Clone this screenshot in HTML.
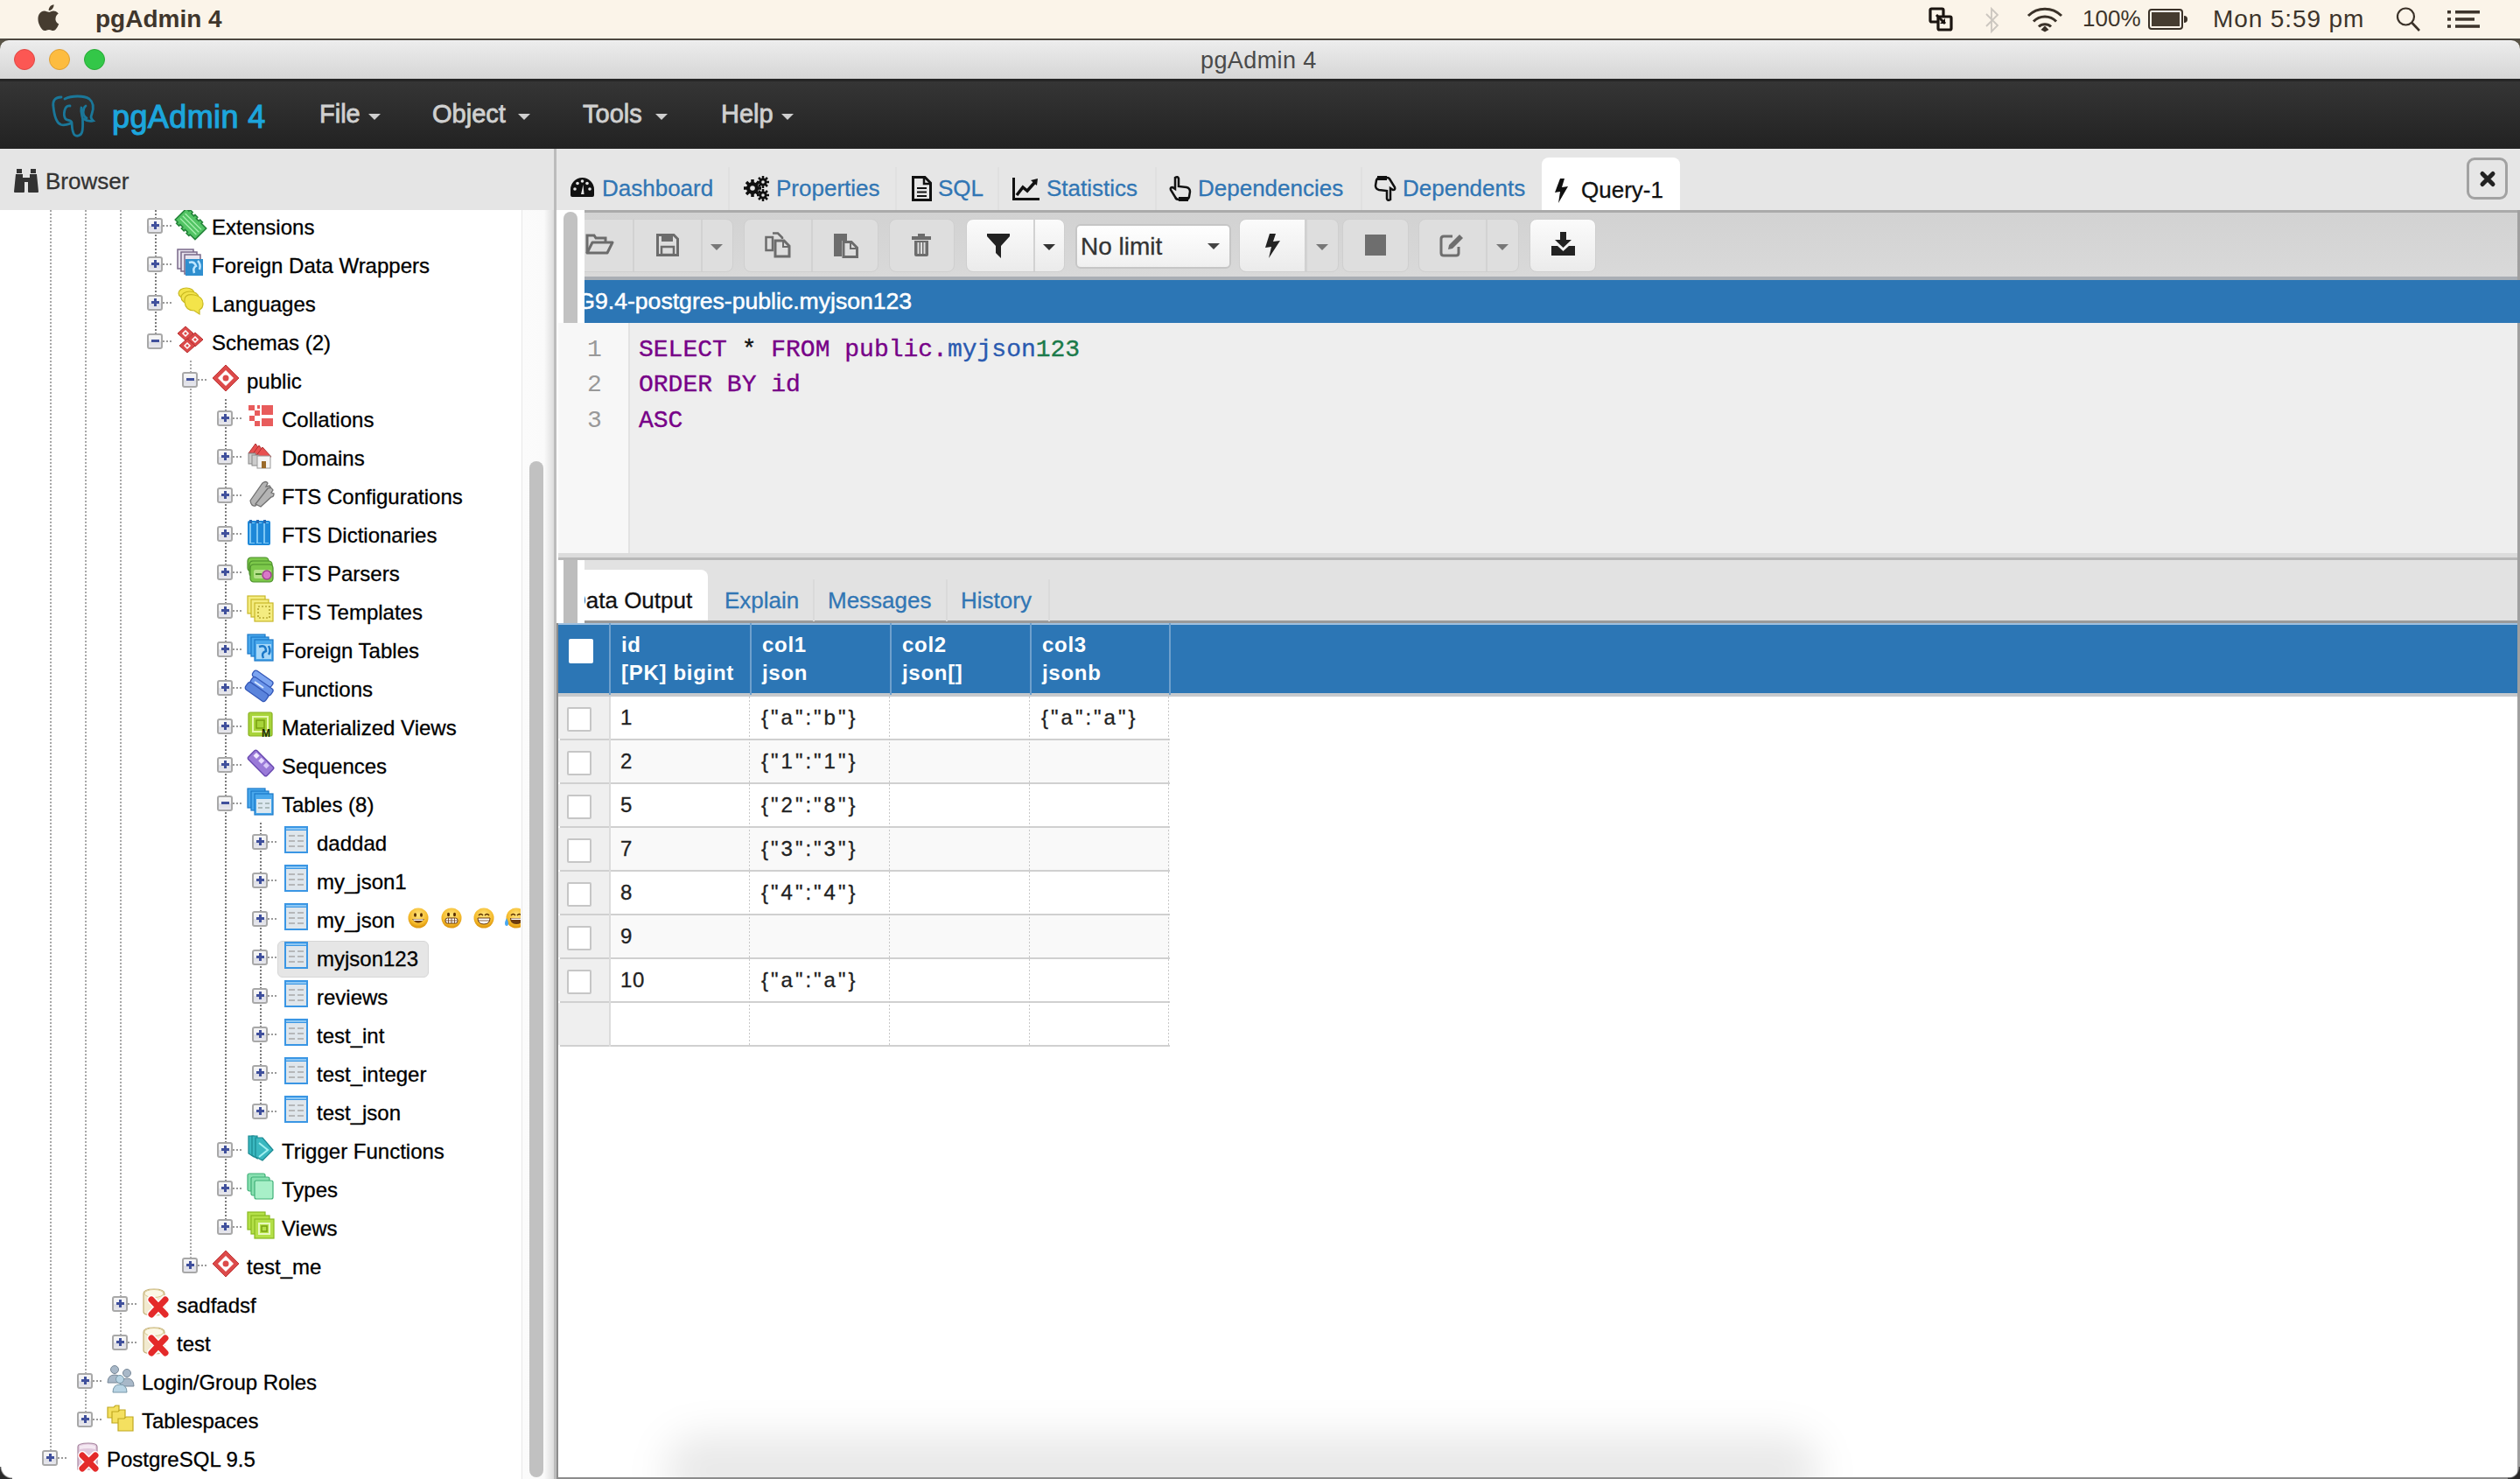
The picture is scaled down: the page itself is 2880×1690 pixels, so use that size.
<!DOCTYPE html><html><head><meta charset="utf-8"><style>
*{box-sizing:border-box;margin:0;padding:0}
html,body{width:2880px;height:1690px;overflow:hidden;background:#fff}
body{position:relative;font-family:"Liberation Sans", sans-serif;}
.a{position:absolute}
.t{position:absolute;white-space:pre;line-height:1}
svg{position:absolute;overflow:visible}
</style></head><body><div class="a" style="left:0;top:0;width:2880px;height:44px;background:#fbf4e9"></div>
<div class="a" style="left:0;top:44px;width:2880px;height:2px;background:#4d4840"></div>
<svg style="left:42px;top:4px" width="26" height="32" viewBox="0 0 26 32">
<path fill="#463c30" d="M21.6 17.1c0-3.8 3.1-5.6 3.2-5.7-1.8-2.6-4.5-2.9-5.4-3-2.3-.2-4.5 1.4-5.7 1.4-1.2 0-3-1.3-4.9-1.3C6.3 8.5 4 10 2.7 12.3c-2.6 4.6-.7 11.400 1.900 15.100 1.200 1.800 2.700 3.800 4.600 3.700 1.800-.1 2.500-1.200 4.800-1.200 2.200 0 2.800 1.200 4.800 1.200 2 0 3.200-1.800 4.400-3.600 1.400-2.100 2-4.100 2-4.200-.1 0-3.800-1.500-3.800-5.900zM18 5.900c1-1.200 1.700-2.900 1.500-4.600-1.500.1-3.200 1-4.300 2.200-.9 1.100-1.700 2.800-1.500 4.500 1.600.1 3.300-.9 4.300-2.100z"/></svg>
<div class="t" style="left:109px;top:8.48px;font-size:28px;color:#3f362c;font-weight:bold;">pgAdmin 4</div>
<svg style="left:2204px;top:8px" width="28" height="28" viewBox="0 0 28 28">
<rect x="2" y="2" width="15" height="15" rx="1.5" fill="none" stroke="#1a1410" stroke-width="3.2"/>
<rect x="11" y="11" width="15" height="15" rx="1.5" fill="#fbf4e9" stroke="#1a1410" stroke-width="3.2"/>
<path d="M9 9 L19 19" stroke="#1a1410" stroke-width="3"/><path d="M19 13 L19 19 L13 19" fill="#1a1410"/></svg>
<svg style="left:2267px;top:8px" width="20" height="30" viewBox="0 0 20 30">
<path d="M3 8 L16 21 L9 28 L9 2 L16 9 L3 22" fill="none" stroke="#cbc6bf" stroke-width="1.8"/></svg>
<svg style="left:2316px;top:7px" width="42" height="30" viewBox="0 0 42 30">
<path d="M2 11 A27 27 0 0 1 40 11" fill="none" stroke="#3a3128" stroke-width="3"/>
<path d="M8 17.5 A18 18 0 0 1 34 17.5" fill="none" stroke="#3a3128" stroke-width="3"/>
<path d="M14 23.5 A10 10 0 0 1 28 23.5" fill="none" stroke="#3a3128" stroke-width="3"/>
<path d="M16.5 27 L21 22.5 L25.5 27 L21 29.5Z" fill="#3a3128"/></svg>
<div class="t" style="left:2380px;top:8.16px;font-size:26px;color:#3d342b;">100%</div>
<svg style="left:2455px;top:10px" width="46" height="24" viewBox="0 0 46 24">
<rect x="1" y="1" width="38" height="22" rx="3" fill="none" stroke="#3a3128" stroke-width="2"/>
<rect x="4" y="4" width="32" height="16" fill="#463c30"/>
<path d="M41 8 Q45 8 45 12 Q45 16 41 16Z" fill="#3a3128"/></svg>
<div class="t" style="left:2529px;top:8.18px;font-size:28px;color:#3d342b;letter-spacing:0.9px;">Mon 5:59 pm</div>
<svg style="left:2738px;top:8px" width="30" height="30" viewBox="0 0 30 30">
<circle cx="11.5" cy="11" r="9.5" fill="none" stroke="#3a3128" stroke-width="2.2"/>
<path d="M18.5 18 L27 27" stroke="#3a3128" stroke-width="2.6"/></svg>
<svg style="left:2797px;top:12px" width="38" height="21" viewBox="0 0 38 21">
<rect x="0" y="0" width="4" height="3.5" fill="#3d342b"/><rect x="9" y="0" width="28" height="3.5" fill="#3d342b"/>
<rect x="0" y="8.2" width="4" height="3.5" fill="#3d342b"/><rect x="9" y="8.2" width="22" height="3.5" fill="#3d342b"/>
<rect x="0" y="16.3" width="4" height="3.5" fill="#3d342b"/><rect x="9" y="16.3" width="28" height="3.5" fill="#3d342b"/></svg>
<div class="a" style="left:0;top:46px;width:2880px;height:14px;background:#5a5548"></div>
<div class="a" style="left:0;top:46px;width:2880px;height:44px;background:linear-gradient(#ececec,#d6d6d6);border-radius:10px 10px 0 0;border-top:1px solid #f6f6f6"></div>
<div class="a" style="left:16px;top:56px;width:24px;height:24px;border-radius:50%;background:#fc5753;border:1px solid #df4744"></div>
<div class="a" style="left:56px;top:56px;width:24px;height:24px;border-radius:50%;background:#fdbc40;border:1px solid #de9f34"></div>
<div class="a" style="left:96px;top:56px;width:24px;height:24px;border-radius:50%;background:#33c748;border:1px solid #27aa35"></div>
<div class="t" style="left:1372px;top:56.32px;font-size:27px;color:#4a4a4a;letter-spacing:0.4px;">pgAdmin 4</div>
<div class="a" style="left:0;top:90px;width:2880px;height:80px;background:linear-gradient(#353535,#222222);border-top:3px solid #262626"></div>
<svg style="left:58px;top:108px" width="52" height="50" viewBox="0 0 52 50">
<g fill="none" stroke="#1a7799" stroke-width="2.8" stroke-linecap="round">
<path d="M12 3 C4 3 2 8 3 14 C4 24 7 33 12 34.5 C16 35.5 20 34 23 33"/>
<path d="M16 5 C24 1 38 1 44 5 C49 9 49 16 47 22 C46 25 45 27 48.5 30 C45 31 41 30 38 28"/>
<path d="M22 13 C15 12 14 24 17 28 C19 30 23 29 24 32 C24.5 37 24 42 27 46 C30 48.5 35 47 36 42 C37 37 36.5 32 36.5 28 C36 24 34 20 35 15"/>
<path d="M40 13 C36 16 36 24 41 27"/>
</g></svg>
<div class="t" style="left:128px;top:115.76px;font-size:36px;color:#1ca5dc;-webkit-text-stroke:1.1px #1ca5dc;letter-spacing:0.4px;">pgAdmin 4</div>
<div class="t" style="left:365px;top:115.64px;font-size:29px;color:#d0d0d0;-webkit-text-stroke:0.8px #d0d0d0;">File</div>
<div class="a" style="left:421px;top:130px;width:0;height:0;border-left:7px solid transparent;border-right:7px solid transparent;border-top:7px solid #cfcfcf"></div>
<div class="t" style="left:494px;top:115.64px;font-size:29px;color:#d0d0d0;-webkit-text-stroke:0.8px #d0d0d0;">Object</div>
<div class="a" style="left:592px;top:130px;width:0;height:0;border-left:7px solid transparent;border-right:7px solid transparent;border-top:7px solid #cfcfcf"></div>
<div class="t" style="left:666px;top:115.64px;font-size:29px;color:#d0d0d0;-webkit-text-stroke:0.8px #d0d0d0;">Tools</div>
<div class="a" style="left:749px;top:130px;width:0;height:0;border-left:7px solid transparent;border-right:7px solid transparent;border-top:7px solid #cfcfcf"></div>
<div class="t" style="left:824px;top:115.64px;font-size:29px;color:#d0d0d0;-webkit-text-stroke:0.8px #d0d0d0;">Help</div>
<div class="a" style="left:893px;top:130px;width:0;height:0;border-left:7px solid transparent;border-right:7px solid transparent;border-top:7px solid #cfcfcf"></div>
<div class="a" style="left:0;top:170px;width:634px;height:70px;background:#e5e5e5"></div>
<svg style="left:16px;top:193px" width="28" height="28" viewBox="0 0 28 28">
<g fill="#333">
<rect x="3" y="0" width="6" height="5"/><rect x="19" y="0" width="6" height="5"/>
<path d="M2 6 H10 V10 H18 V6 H26 L28 26 Q28 27 27 27 H17 Q16 27 16 26 V15 H12 V26 Q12 27 11 27 H1 Q0 27 0 26Z"/>
</g></svg>
<div class="t" style="left:52px;top:194.16px;font-size:26px;color:#333;-webkit-text-stroke:0.3px #333;">Browser</div>
<div class="a" style="left:0;top:240px;width:634px;height:1450px;background:#fff"></div>
<div class="a" style="left:596px;top:240px;width:38px;height:1450px;background:linear-gradient(90deg,#e8e8e8 0 1px,#fbfbfb 1px,#fafafa 68%,#dadada 100%)"></div>
<div class="a" style="left:605px;top:527px;width:16px;height:1161px;background:#c1c1c1;border-radius:8px"></div>
<div class="a" style="left:0;top:240px;width:595px;height:1450px;overflow:hidden"><div class="a" style="left:0;top:-240px;width:595px;height:1690px"><div class="a" style="left:56.5px;top:240.0px;width:2.5px;height:1425.5px;background:repeating-linear-gradient(180deg,#a8a8a8 0 2px,transparent 2px 4px)"></div><div class="a" style="left:96.5px;top:240.0px;width:2.5px;height:1381.5px;background:repeating-linear-gradient(180deg,#a8a8a8 0 2px,transparent 2px 4px)"></div><div class="a" style="left:136.5px;top:240.0px;width:2.5px;height:1293.5px;background:repeating-linear-gradient(180deg,#a8a8a8 0 2px,transparent 2px 4px)"></div><div class="a" style="left:176.5px;top:240.0px;width:2.5px;height:149.5px;background:repeating-linear-gradient(180deg,#7c7c7c 0 2px,transparent 2px 4px)"></div><div class="a" style="left:216.5px;top:411.5px;width:2.5px;height:1034.0px;background:repeating-linear-gradient(180deg,#a8a8a8 0 2px,transparent 2px 4px)"></div><div class="a" style="left:256.5px;top:455.5px;width:2.5px;height:946.0px;background:repeating-linear-gradient(180deg,#7c7c7c 0 2px,transparent 2px 4px)"></div><div class="a" style="left:296.5px;top:939.5px;width:2.5px;height:330.0px;background:repeating-linear-gradient(180deg,#7c7c7c 0 2px,transparent 2px 4px)"></div><div class="a" style="left:317px;top:1075px;width:173px;height:42px;background:#e6e6e6;border:1px solid #d6d6d6;border-radius:6px"></div><div class="a" style="left:186px;top:256.5px;width:12px;height:2px;background:repeating-linear-gradient(90deg,#9a9a9a 0 2px,transparent 2px 4px)"></div><div class="a" style="left:168px;top:248.5px;width:18px;height:18px;border:2px solid #a8a8a8;border-radius:3px;background:linear-gradient(#f6f6f6,#f0f0f2 50%,#dcdde4 55%,#e8e8ee)"><div class="a" style="left:2.5px;top:5.5px;width:9px;height:3px;background:#40509c"></div><div class="a" style="left:5.5px;top:2.5px;width:3px;height:9px;background:#40509c"></div></div><svg style="left:202px;top:240.0px" width="32" height="32" viewBox="0 0 32 32"><g transform="rotate(45 16 16)"><path d="M0 7 H4 V5 H8 V7 H12 V5 H16 V7 H20 V5 H24 V7 H32 V25 H24 V27 H20 V25 H16 V27 H12 V25 H8 V27 H4 V25 H0Z" fill="#52c464" stroke="#24843a" stroke-width="1.6"/>
<path d="M3 12 H29 M3 16 H29 M3 20 H29" stroke="#a8f0b0" stroke-width="1.3"/></g></svg><div class="t" style="left:242px;top:247.84px;font-size:24px;color:#000;-webkit-text-stroke:0.3px #000;">Extensions</div><div class="a" style="left:186px;top:300.5px;width:12px;height:2px;background:repeating-linear-gradient(90deg,#9a9a9a 0 2px,transparent 2px 4px)"></div><div class="a" style="left:168px;top:292.5px;width:18px;height:18px;border:2px solid #a8a8a8;border-radius:3px;background:linear-gradient(#f6f6f6,#f0f0f2 50%,#dcdde4 55%,#e8e8ee)"><div class="a" style="left:2.5px;top:5.5px;width:9px;height:3px;background:#40509c"></div><div class="a" style="left:5.5px;top:2.5px;width:3px;height:9px;background:#40509c"></div></div><svg style="left:202px;top:284.0px" width="32" height="32" viewBox="0 0 32 32"><g stroke="#7a6a8a" stroke-width="1.5" fill="#e8e4ee"><rect x="1" y="1" width="18" height="22"/><rect x="5" y="4" width="18" height="22"/><rect x="9" y="7" width="18" height="22"/></g>
<rect x="10" y="12" width="20" height="19" fill="#2f8fcf"/><path d="M14 16 Q20 14 22 20 Q18 22 20 28 M24 14 Q28 18 26 24" stroke="#bfe6ff" stroke-width="2.5" fill="none"/></svg><div class="t" style="left:242px;top:291.84px;font-size:24px;color:#000;-webkit-text-stroke:0.3px #000;">Foreign Data Wrappers</div><div class="a" style="left:186px;top:344.5px;width:12px;height:2px;background:repeating-linear-gradient(90deg,#9a9a9a 0 2px,transparent 2px 4px)"></div><div class="a" style="left:168px;top:336.5px;width:18px;height:18px;border:2px solid #a8a8a8;border-radius:3px;background:linear-gradient(#f6f6f6,#f0f0f2 50%,#dcdde4 55%,#e8e8ee)"><div class="a" style="left:2.5px;top:5.5px;width:9px;height:3px;background:#40509c"></div><div class="a" style="left:5.5px;top:2.5px;width:3px;height:9px;background:#40509c"></div></div><svg style="left:202px;top:328.0px" width="32" height="32" viewBox="0 0 32 32"><g fill="#f3e44a" stroke="#c8b820" stroke-width="1.2"><ellipse cx="11" cy="7" rx="9" ry="6"/><ellipse cx="15" cy="12" rx="10" ry="7"/><path d="M9 17 Q8 7 20 9 Q30 11 30 19 Q30 24 26 26 L26 31 L20 27 Q10 27 9 17Z"/></g></svg><div class="t" style="left:242px;top:335.84px;font-size:24px;color:#000;-webkit-text-stroke:0.3px #000;">Languages</div><div class="a" style="left:186px;top:388.5px;width:12px;height:2px;background:repeating-linear-gradient(90deg,#9a9a9a 0 2px,transparent 2px 4px)"></div><div class="a" style="left:168px;top:380.5px;width:18px;height:18px;border:2px solid #a8a8a8;border-radius:3px;background:linear-gradient(#f6f6f6,#f0f0f2 50%,#dcdde4 55%,#e8e8ee)"><div class="a" style="left:2.5px;top:5.5px;width:9px;height:3px;background:#40509c"></div></div><svg style="left:202px;top:372.0px" width="32" height="32" viewBox="0 0 32 32"><g fill="#dc4a4a" stroke="#b83030" stroke-width="1"><path d="M10 1 L19 9 L10 17 L1 9Z"/><path d="M21 8 L30 16 L21 24 L12 16Z"/><path d="M12 15 L21 23 L12 31 L3 23Z"/></g>
<g fill="none" stroke="#fff" stroke-width="1.5"><path d="M10 6 L13 9 L10 12 L7 9Z"/><path d="M21 13 L24 16 L21 19 L18 16Z"/><path d="M12 20 L15 23 L12 26 L9 23Z"/></g></svg><div class="t" style="left:242px;top:379.84px;font-size:24px;color:#000;-webkit-text-stroke:0.3px #000;">Schemas (2)</div><div class="a" style="left:226px;top:432.5px;width:12px;height:2px;background:repeating-linear-gradient(90deg,#9a9a9a 0 2px,transparent 2px 4px)"></div><div class="a" style="left:208px;top:424.5px;width:18px;height:18px;border:2px solid #a8a8a8;border-radius:3px;background:linear-gradient(#f6f6f6,#f0f0f2 50%,#dcdde4 55%,#e8e8ee)"><div class="a" style="left:2.5px;top:5.5px;width:9px;height:3px;background:#40509c"></div></div><svg style="left:242px;top:416.0px" width="32" height="32" viewBox="0 0 32 32"><path d="M16 1 L31 16 L16 31 L1 16Z" fill="#dc4a4a" stroke="#c03a3a" stroke-width="1"/><path d="M16 7 L25 16 L16 25 L7 16Z" fill="#fff"/><circle cx="16" cy="16" r="3.5" fill="#dc4a4a"/></svg><div class="t" style="left:282px;top:423.84px;font-size:24px;color:#000;-webkit-text-stroke:0.3px #000;">public</div><div class="a" style="left:266px;top:476.5px;width:12px;height:2px;background:repeating-linear-gradient(90deg,#9a9a9a 0 2px,transparent 2px 4px)"></div><div class="a" style="left:248px;top:468.5px;width:18px;height:18px;border:2px solid #a8a8a8;border-radius:3px;background:linear-gradient(#f6f6f6,#f0f0f2 50%,#dcdde4 55%,#e8e8ee)"><div class="a" style="left:2.5px;top:5.5px;width:9px;height:3px;background:#40509c"></div><div class="a" style="left:5.5px;top:2.5px;width:3px;height:9px;background:#40509c"></div></div><svg style="left:282px;top:460.0px" width="32" height="32" viewBox="0 0 32 32"><g fill="#e85c5c"><rect x="2" y="3" width="7" height="6"/><rect x="9" y="9" width="6" height="6"/><rect x="3" y="15" width="6" height="6"/><rect x="9" y="21" width="6" height="6"/><rect x="17" y="3" width="13" height="11"/><rect x="17" y="18" width="13" height="9"/><rect x="12" y="3" width="3" height="4"/></g></svg><div class="t" style="left:322px;top:467.84px;font-size:24px;color:#000;-webkit-text-stroke:0.3px #000;">Collations</div><div class="a" style="left:266px;top:520.5px;width:12px;height:2px;background:repeating-linear-gradient(90deg,#9a9a9a 0 2px,transparent 2px 4px)"></div><div class="a" style="left:248px;top:512.5px;width:18px;height:18px;border:2px solid #a8a8a8;border-radius:3px;background:linear-gradient(#f6f6f6,#f0f0f2 50%,#dcdde4 55%,#e8e8ee)"><div class="a" style="left:2.5px;top:5.5px;width:9px;height:3px;background:#40509c"></div><div class="a" style="left:5.5px;top:2.5px;width:3px;height:9px;background:#40509c"></div></div><svg style="left:282px;top:504.0px" width="32" height="32" viewBox="0 0 32 32"><g fill="#e85050" stroke="#b03030" stroke-width="1"><path d="M2 14 L10 3 L18 14Z"/><path d="M6 16 L14 5 L22 16Z"/><path d="M10 18 L18 7 L28 18Z"/></g>
<g fill="#ccc" stroke="#888" stroke-width="1"><rect x="2" y="14" width="8" height="12"/><rect x="6" y="16" width="8" height="12"/></g>
<rect x="12" y="17" width="15" height="14" fill="#f4f4f4" stroke="#999" stroke-width="1"/><rect x="17" y="23" width="5" height="8" fill="#9a6a2a"/></svg><div class="t" style="left:322px;top:511.84px;font-size:24px;color:#000;-webkit-text-stroke:0.3px #000;">Domains</div><div class="a" style="left:266px;top:564.5px;width:12px;height:2px;background:repeating-linear-gradient(90deg,#9a9a9a 0 2px,transparent 2px 4px)"></div><div class="a" style="left:248px;top:556.5px;width:18px;height:18px;border:2px solid #a8a8a8;border-radius:3px;background:linear-gradient(#f6f6f6,#f0f0f2 50%,#dcdde4 55%,#e8e8ee)"><div class="a" style="left:2.5px;top:5.5px;width:9px;height:3px;background:#40509c"></div><div class="a" style="left:5.5px;top:2.5px;width:3px;height:9px;background:#40509c"></div></div><svg style="left:282px;top:548.0px" width="32" height="32" viewBox="0 0 32 32"><g fill="#b4b4b4" stroke="#707070" stroke-width="1.3"><path d="M4 24 L18 4 Q22 1 24 4 L22 8 L26 7 Q29 10 26 12 L10 30 Q5 31 4 24Z"/><path d="M10 28 L24 10 Q28 8 30 12 L28 15 L31 16 Q31 20 28 20 L16 31Z"/></g></svg><div class="t" style="left:322px;top:555.84px;font-size:24px;color:#000;-webkit-text-stroke:0.3px #000;">FTS Configurations</div><div class="a" style="left:266px;top:608.5px;width:12px;height:2px;background:repeating-linear-gradient(90deg,#9a9a9a 0 2px,transparent 2px 4px)"></div><div class="a" style="left:248px;top:600.5px;width:18px;height:18px;border:2px solid #a8a8a8;border-radius:3px;background:linear-gradient(#f6f6f6,#f0f0f2 50%,#dcdde4 55%,#e8e8ee)"><div class="a" style="left:2.5px;top:5.5px;width:9px;height:3px;background:#40509c"></div><div class="a" style="left:5.5px;top:2.5px;width:3px;height:9px;background:#40509c"></div></div><svg style="left:282px;top:592.0px" width="32" height="32" viewBox="0 0 32 32"><rect x="1" y="3" width="26" height="28" rx="2" fill="#1e88d8"/><g fill="#7cc6f4"><rect x="3" y="5" width="6" height="24"/><rect x="11" y="5" width="6" height="24"/><rect x="19" y="5" width="6" height="24"/></g><g fill="#2a6ab0"><rect x="3" y="2" width="3" height="4"/><rect x="11" y="2" width="3" height="4"/><rect x="19" y="2" width="3" height="4"/></g><g fill="#1e88d8"><rect x="5" y="6" width="4" height="22"/><rect x="13" y="6" width="4" height="22"/><rect x="21" y="6" width="4" height="22"/></g></svg><div class="t" style="left:322px;top:599.84px;font-size:24px;color:#000;-webkit-text-stroke:0.3px #000;">FTS Dictionaries</div><div class="a" style="left:266px;top:652.5px;width:12px;height:2px;background:repeating-linear-gradient(90deg,#9a9a9a 0 2px,transparent 2px 4px)"></div><div class="a" style="left:248px;top:644.5px;width:18px;height:18px;border:2px solid #a8a8a8;border-radius:3px;background:linear-gradient(#f6f6f6,#f0f0f2 50%,#dcdde4 55%,#e8e8ee)"><div class="a" style="left:2.5px;top:5.5px;width:9px;height:3px;background:#40509c"></div><div class="a" style="left:5.5px;top:2.5px;width:3px;height:9px;background:#40509c"></div></div><svg style="left:282px;top:636.0px" width="32" height="32" viewBox="0 0 32 32"><g fill="#7cc84a" stroke="#4a8e2a" stroke-width="1.2"><rect x="1" y="1" width="24" height="16" rx="4"/><rect x="3" y="5" width="26" height="18" rx="4"/><rect x="4" y="9" width="26" height="20" rx="4"/></g><rect x="8" y="15" width="20" height="10" rx="2" fill="#b4e088"/><circle cx="23" cy="21" r="5" fill="#d878c8" stroke="#a04090" stroke-width="1.5"/><path d="M10 20 H17" stroke="#4a8e2a" stroke-width="2"/></svg><div class="t" style="left:322px;top:643.84px;font-size:24px;color:#000;-webkit-text-stroke:0.3px #000;">FTS Parsers</div><div class="a" style="left:266px;top:696.5px;width:12px;height:2px;background:repeating-linear-gradient(90deg,#9a9a9a 0 2px,transparent 2px 4px)"></div><div class="a" style="left:248px;top:688.5px;width:18px;height:18px;border:2px solid #a8a8a8;border-radius:3px;background:linear-gradient(#f6f6f6,#f0f0f2 50%,#dcdde4 55%,#e8e8ee)"><div class="a" style="left:2.5px;top:5.5px;width:9px;height:3px;background:#40509c"></div><div class="a" style="left:5.5px;top:2.5px;width:3px;height:9px;background:#40509c"></div></div><svg style="left:282px;top:680.0px" width="32" height="32" viewBox="0 0 32 32"><g fill="#f4ec80" stroke="#c8b828" stroke-width="1.2"><rect x="1" y="1" width="20" height="20"/><rect x="5" y="5" width="20" height="20"/><rect x="9" y="9" width="21" height="21"/></g><rect x="13" y="13" width="13" height="13" fill="none" stroke="#9a8a10" stroke-width="1.2" stroke-dasharray="2 2"/></svg><div class="t" style="left:322px;top:687.84px;font-size:24px;color:#000;-webkit-text-stroke:0.3px #000;">FTS Templates</div><div class="a" style="left:266px;top:740.5px;width:12px;height:2px;background:repeating-linear-gradient(90deg,#9a9a9a 0 2px,transparent 2px 4px)"></div><div class="a" style="left:248px;top:732.5px;width:18px;height:18px;border:2px solid #a8a8a8;border-radius:3px;background:linear-gradient(#f6f6f6,#f0f0f2 50%,#dcdde4 55%,#e8e8ee)"><div class="a" style="left:2.5px;top:5.5px;width:9px;height:3px;background:#40509c"></div><div class="a" style="left:5.5px;top:2.5px;width:3px;height:9px;background:#40509c"></div></div><svg style="left:282px;top:724.0px" width="32" height="32" viewBox="0 0 32 32"><g fill="#4aa8ec" stroke="#1a78c8" stroke-width="1.2"><rect x="1" y="1" width="20" height="22"/><rect x="5" y="4" width="20" height="22"/><rect x="9" y="7" width="21" height="24"/></g><rect x="11" y="12" width="17" height="17" fill="#a8d8f8"/><path d="M14 15 Q22 12 22 20 Q16 22 19 28 M25 14 Q28 20 25 24" stroke="#1a78c8" stroke-width="2.5" fill="none"/></svg><div class="t" style="left:322px;top:731.84px;font-size:24px;color:#000;-webkit-text-stroke:0.3px #000;">Foreign Tables</div><div class="a" style="left:266px;top:784.5px;width:12px;height:2px;background:repeating-linear-gradient(90deg,#9a9a9a 0 2px,transparent 2px 4px)"></div><div class="a" style="left:248px;top:776.5px;width:18px;height:18px;border:2px solid #a8a8a8;border-radius:3px;background:linear-gradient(#f6f6f6,#f0f0f2 50%,#dcdde4 55%,#e8e8ee)"><div class="a" style="left:2.5px;top:5.5px;width:9px;height:3px;background:#40509c"></div><div class="a" style="left:5.5px;top:2.5px;width:3px;height:9px;background:#40509c"></div></div><svg style="left:282px;top:768.0px" width="32" height="32" viewBox="0 0 32 32"><g transform="rotate(35 16 16)" stroke="#3458b8" stroke-width="1.3">
<rect x="0" y="4" width="26" height="8" rx="3" fill="#7ca4f0"/>
<rect x="3" y="11" width="28" height="9" rx="3" fill="#6a94e8"/>
<rect x="2" y="19" width="28" height="10" rx="3" fill="#5a84dc"/></g>
<path d="M9 11 L19 18" stroke="#d8e8ff" stroke-width="2"/></svg><div class="t" style="left:322px;top:775.84px;font-size:24px;color:#000;-webkit-text-stroke:0.3px #000;">Functions</div><div class="a" style="left:266px;top:828.5px;width:12px;height:2px;background:repeating-linear-gradient(90deg,#9a9a9a 0 2px,transparent 2px 4px)"></div><div class="a" style="left:248px;top:820.5px;width:18px;height:18px;border:2px solid #a8a8a8;border-radius:3px;background:linear-gradient(#f6f6f6,#f0f0f2 50%,#dcdde4 55%,#e8e8ee)"><div class="a" style="left:2.5px;top:5.5px;width:9px;height:3px;background:#40509c"></div><div class="a" style="left:5.5px;top:2.5px;width:3px;height:9px;background:#40509c"></div></div><svg style="left:282px;top:812.0px" width="32" height="32" viewBox="0 0 32 32"><rect x="2" y="2" width="27" height="27" rx="2" fill="#a8d43a" stroke="#88b020" stroke-width="1.2"/><rect x="7" y="7" width="17" height="17" fill="none" stroke="#e8f8b0" stroke-width="2"/><rect x="11" y="11" width="9" height="9" fill="none" stroke="#78a010" stroke-width="1.5"/><text x="17" y="30" font-family="Liberation Sans" font-weight="bold" font-size="12" fill="#1a2a00">M</text></svg><div class="t" style="left:322px;top:819.84px;font-size:24px;color:#000;-webkit-text-stroke:0.3px #000;">Materialized Views</div><div class="a" style="left:266px;top:872.5px;width:12px;height:2px;background:repeating-linear-gradient(90deg,#9a9a9a 0 2px,transparent 2px 4px)"></div><div class="a" style="left:248px;top:864.5px;width:18px;height:18px;border:2px solid #a8a8a8;border-radius:3px;background:linear-gradient(#f6f6f6,#f0f0f2 50%,#dcdde4 55%,#e8e8ee)"><div class="a" style="left:2.5px;top:5.5px;width:9px;height:3px;background:#40509c"></div><div class="a" style="left:5.5px;top:2.5px;width:3px;height:9px;background:#40509c"></div></div><svg style="left:282px;top:856.0px" width="32" height="32" viewBox="0 0 32 32"><g transform="rotate(45 16 16)"><rect x="1" y="9" width="30" height="14" rx="2" fill="#9a7ad8" stroke="#6848b0" stroke-width="1.4"/>
<rect x="4" y="11" width="5" height="5" fill="#f0e8ff"/><rect x="12" y="11" width="5" height="5" fill="#e8dcff"/><rect x="20" y="11" width="5" height="5" fill="#d8c8f8"/></g></svg><div class="t" style="left:322px;top:863.84px;font-size:24px;color:#000;-webkit-text-stroke:0.3px #000;">Sequences</div><div class="a" style="left:266px;top:916.5px;width:12px;height:2px;background:repeating-linear-gradient(90deg,#9a9a9a 0 2px,transparent 2px 4px)"></div><div class="a" style="left:248px;top:908.5px;width:18px;height:18px;border:2px solid #a8a8a8;border-radius:3px;background:linear-gradient(#f6f6f6,#f0f0f2 50%,#dcdde4 55%,#e8e8ee)"><div class="a" style="left:2.5px;top:5.5px;width:9px;height:3px;background:#40509c"></div></div><svg style="left:282px;top:900.0px" width="32" height="32" viewBox="0 0 32 32"><g fill="#4aa8ec" stroke="#1a78c8" stroke-width="1.2"><rect x="1" y="1" width="20" height="22"/><rect x="5" y="4" width="20" height="22"/><rect x="9" y="7" width="21" height="24"/></g><rect x="11" y="13" width="17" height="16" fill="#dce8f0"/><g stroke="#9aa" stroke-width="1.5"><path d="M13 18 H18 M21 18 H26 M13 23 H18 M21 23 H26"/></g></svg><div class="t" style="left:322px;top:907.84px;font-size:24px;color:#000;-webkit-text-stroke:0.3px #000;">Tables (8)</div><div class="a" style="left:306px;top:960.5px;width:12px;height:2px;background:repeating-linear-gradient(90deg,#9a9a9a 0 2px,transparent 2px 4px)"></div><div class="a" style="left:288px;top:952.5px;width:18px;height:18px;border:2px solid #a8a8a8;border-radius:3px;background:linear-gradient(#f6f6f6,#f0f0f2 50%,#dcdde4 55%,#e8e8ee)"><div class="a" style="left:2.5px;top:5.5px;width:9px;height:3px;background:#40509c"></div><div class="a" style="left:5.5px;top:2.5px;width:3px;height:9px;background:#40509c"></div></div><svg style="left:322px;top:944.0px" width="32" height="32" viewBox="0 0 32 32"><rect x="3" y="0" width="27" height="31" fill="#3a96e4"/><rect x="5" y="5" width="23" height="24" fill="#dfe6ec"/><rect x="5" y="2" width="23" height="2" fill="#8ec8f4"/><g stroke="#a8a8a8" stroke-width="1.6"><path d="M8 11 H15 M18 11 H25 M8 17 H15 M18 17 H25 M8 23 H15 M18 23 H25"/></g></svg><div class="t" style="left:362px;top:951.84px;font-size:24px;color:#000;-webkit-text-stroke:0.3px #000;">daddad</div><div class="a" style="left:306px;top:1004.5px;width:12px;height:2px;background:repeating-linear-gradient(90deg,#9a9a9a 0 2px,transparent 2px 4px)"></div><div class="a" style="left:288px;top:996.5px;width:18px;height:18px;border:2px solid #a8a8a8;border-radius:3px;background:linear-gradient(#f6f6f6,#f0f0f2 50%,#dcdde4 55%,#e8e8ee)"><div class="a" style="left:2.5px;top:5.5px;width:9px;height:3px;background:#40509c"></div><div class="a" style="left:5.5px;top:2.5px;width:3px;height:9px;background:#40509c"></div></div><svg style="left:322px;top:988.0px" width="32" height="32" viewBox="0 0 32 32"><rect x="3" y="0" width="27" height="31" fill="#3a96e4"/><rect x="5" y="5" width="23" height="24" fill="#dfe6ec"/><rect x="5" y="2" width="23" height="2" fill="#8ec8f4"/><g stroke="#a8a8a8" stroke-width="1.6"><path d="M8 11 H15 M18 11 H25 M8 17 H15 M18 17 H25 M8 23 H15 M18 23 H25"/></g></svg><div class="t" style="left:362px;top:995.84px;font-size:24px;color:#000;-webkit-text-stroke:0.3px #000;">my_json1</div><div class="a" style="left:306px;top:1048.5px;width:12px;height:2px;background:repeating-linear-gradient(90deg,#9a9a9a 0 2px,transparent 2px 4px)"></div><div class="a" style="left:288px;top:1040.5px;width:18px;height:18px;border:2px solid #a8a8a8;border-radius:3px;background:linear-gradient(#f6f6f6,#f0f0f2 50%,#dcdde4 55%,#e8e8ee)"><div class="a" style="left:2.5px;top:5.5px;width:9px;height:3px;background:#40509c"></div><div class="a" style="left:5.5px;top:2.5px;width:3px;height:9px;background:#40509c"></div></div><svg style="left:322px;top:1032.0px" width="32" height="32" viewBox="0 0 32 32"><rect x="3" y="0" width="27" height="31" fill="#3a96e4"/><rect x="5" y="5" width="23" height="24" fill="#dfe6ec"/><rect x="5" y="2" width="23" height="2" fill="#8ec8f4"/><g stroke="#a8a8a8" stroke-width="1.6"><path d="M8 11 H15 M18 11 H25 M8 17 H15 M18 17 H25 M8 23 H15 M18 23 H25"/></g></svg><div class="t" style="left:362px;top:1039.84px;font-size:24px;color:#000;-webkit-text-stroke:0.3px #000;">my_json</div><svg style="left:466px;top:1037.0px" width="24" height="24" viewBox="0 0 24 24"><defs><radialGradient id="eg0" cx="50%" cy="35%" r="60%"><stop offset="0" stop-color="#ffe680"/><stop offset=".75" stop-color="#f5bb2c"/><stop offset="1" stop-color="#e09a10"/></radialGradient></defs><circle cx="12" cy="12" r="11.5" fill="url(#eg0)"/><path d="M5 13 Q12 22 19 13Z" fill="#6a3a10"/><path d="M6 13.5 H18 L17 15 H7Z" fill="#fff"/><ellipse cx="8.5" cy="8.5" rx="1.5" ry="2.2" fill="#5a3000"/><ellipse cx="15.5" cy="8.5" rx="1.5" ry="2.2" fill="#5a3000"/></svg><svg style="left:503.5px;top:1037.0px" width="24" height="24" viewBox="0 0 24 24"><defs><radialGradient id="eg1" cx="50%" cy="35%" r="60%"><stop offset="0" stop-color="#ffe680"/><stop offset=".75" stop-color="#f5bb2c"/><stop offset="1" stop-color="#e09a10"/></radialGradient></defs><circle cx="12" cy="12" r="11.5" fill="url(#eg1)"/><rect x="5" y="12" width="14" height="6" rx="2.5" fill="#fff" stroke="#6a3a10" stroke-width="1"/><path d="M5 15 H19 M8.5 12 V18 M12 12 V18 M15.5 12 V18" stroke="#6a3a10" stroke-width="0.8"/><ellipse cx="8.5" cy="8" rx="1.5" ry="2.2" fill="#5a3000"/><ellipse cx="15.5" cy="8" rx="1.5" ry="2.2" fill="#5a3000"/></svg><svg style="left:541px;top:1037.0px" width="24" height="24" viewBox="0 0 24 24"><defs><radialGradient id="eg2" cx="50%" cy="35%" r="60%"><stop offset="0" stop-color="#ffe680"/><stop offset=".75" stop-color="#f5bb2c"/><stop offset="1" stop-color="#e09a10"/></radialGradient></defs><circle cx="12" cy="12" r="11.5" fill="url(#eg2)"/><path d="M5 12 H19 Q19 19 12 19 Q5 19 5 12Z" fill="#fff" stroke="#6a3a10" stroke-width="1"/><path d="M5.5 15 H18.5" stroke="#6a3a10" stroke-width="0.8"/><path d="M6 9 Q8.5 6 11 9 M13 9 Q15.5 6 18 9" stroke="#5a3000" stroke-width="1.5" fill="none"/></svg><svg style="left:578px;top:1037.0px" width="24" height="24" viewBox="0 0 24 24"><defs><radialGradient id="eg3" cx="50%" cy="35%" r="60%"><stop offset="0" stop-color="#ffe680"/><stop offset=".75" stop-color="#f5bb2c"/><stop offset="1" stop-color="#e09a10"/></radialGradient></defs><circle cx="12" cy="12" r="11.5" fill="url(#eg3)"/><path d="M5 12 H19 Q19 19 12 19 Q5 19 5 12Z" fill="#6a3a10"/><path d="M6 12.5 H18 L17.5 14 H6.5Z" fill="#fff"/><path d="M6 9 Q8.5 6 11 9 M13 9 Q15.5 6 18 9" stroke="#5a3000" stroke-width="1.5" fill="none"/><path d="M1 12 Q3 16 3 18 Q3 21 1 21 Q-1 21 -1 18 Q-1 16 1 12Z" fill="#4aa8f0"/></svg><div class="a" style="left:306px;top:1092.5px;width:12px;height:2px;background:repeating-linear-gradient(90deg,#9a9a9a 0 2px,transparent 2px 4px)"></div><div class="a" style="left:288px;top:1084.5px;width:18px;height:18px;border:2px solid #a8a8a8;border-radius:3px;background:linear-gradient(#f6f6f6,#f0f0f2 50%,#dcdde4 55%,#e8e8ee)"><div class="a" style="left:2.5px;top:5.5px;width:9px;height:3px;background:#40509c"></div><div class="a" style="left:5.5px;top:2.5px;width:3px;height:9px;background:#40509c"></div></div><svg style="left:322px;top:1076.0px" width="32" height="32" viewBox="0 0 32 32"><rect x="3" y="0" width="27" height="31" fill="#3a96e4"/><rect x="5" y="5" width="23" height="24" fill="#dfe6ec"/><rect x="5" y="2" width="23" height="2" fill="#8ec8f4"/><g stroke="#a8a8a8" stroke-width="1.6"><path d="M8 11 H15 M18 11 H25 M8 17 H15 M18 17 H25 M8 23 H15 M18 23 H25"/></g></svg><div class="t" style="left:362px;top:1083.84px;font-size:24px;color:#000;-webkit-text-stroke:0.3px #000;">myjson123</div><div class="a" style="left:306px;top:1136.5px;width:12px;height:2px;background:repeating-linear-gradient(90deg,#9a9a9a 0 2px,transparent 2px 4px)"></div><div class="a" style="left:288px;top:1128.5px;width:18px;height:18px;border:2px solid #a8a8a8;border-radius:3px;background:linear-gradient(#f6f6f6,#f0f0f2 50%,#dcdde4 55%,#e8e8ee)"><div class="a" style="left:2.5px;top:5.5px;width:9px;height:3px;background:#40509c"></div><div class="a" style="left:5.5px;top:2.5px;width:3px;height:9px;background:#40509c"></div></div><svg style="left:322px;top:1120.0px" width="32" height="32" viewBox="0 0 32 32"><rect x="3" y="0" width="27" height="31" fill="#3a96e4"/><rect x="5" y="5" width="23" height="24" fill="#dfe6ec"/><rect x="5" y="2" width="23" height="2" fill="#8ec8f4"/><g stroke="#a8a8a8" stroke-width="1.6"><path d="M8 11 H15 M18 11 H25 M8 17 H15 M18 17 H25 M8 23 H15 M18 23 H25"/></g></svg><div class="t" style="left:362px;top:1127.84px;font-size:24px;color:#000;-webkit-text-stroke:0.3px #000;">reviews</div><div class="a" style="left:306px;top:1180.5px;width:12px;height:2px;background:repeating-linear-gradient(90deg,#9a9a9a 0 2px,transparent 2px 4px)"></div><div class="a" style="left:288px;top:1172.5px;width:18px;height:18px;border:2px solid #a8a8a8;border-radius:3px;background:linear-gradient(#f6f6f6,#f0f0f2 50%,#dcdde4 55%,#e8e8ee)"><div class="a" style="left:2.5px;top:5.5px;width:9px;height:3px;background:#40509c"></div><div class="a" style="left:5.5px;top:2.5px;width:3px;height:9px;background:#40509c"></div></div><svg style="left:322px;top:1164.0px" width="32" height="32" viewBox="0 0 32 32"><rect x="3" y="0" width="27" height="31" fill="#3a96e4"/><rect x="5" y="5" width="23" height="24" fill="#dfe6ec"/><rect x="5" y="2" width="23" height="2" fill="#8ec8f4"/><g stroke="#a8a8a8" stroke-width="1.6"><path d="M8 11 H15 M18 11 H25 M8 17 H15 M18 17 H25 M8 23 H15 M18 23 H25"/></g></svg><div class="t" style="left:362px;top:1171.84px;font-size:24px;color:#000;-webkit-text-stroke:0.3px #000;">test_int</div><div class="a" style="left:306px;top:1224.5px;width:12px;height:2px;background:repeating-linear-gradient(90deg,#9a9a9a 0 2px,transparent 2px 4px)"></div><div class="a" style="left:288px;top:1216.5px;width:18px;height:18px;border:2px solid #a8a8a8;border-radius:3px;background:linear-gradient(#f6f6f6,#f0f0f2 50%,#dcdde4 55%,#e8e8ee)"><div class="a" style="left:2.5px;top:5.5px;width:9px;height:3px;background:#40509c"></div><div class="a" style="left:5.5px;top:2.5px;width:3px;height:9px;background:#40509c"></div></div><svg style="left:322px;top:1208.0px" width="32" height="32" viewBox="0 0 32 32"><rect x="3" y="0" width="27" height="31" fill="#3a96e4"/><rect x="5" y="5" width="23" height="24" fill="#dfe6ec"/><rect x="5" y="2" width="23" height="2" fill="#8ec8f4"/><g stroke="#a8a8a8" stroke-width="1.6"><path d="M8 11 H15 M18 11 H25 M8 17 H15 M18 17 H25 M8 23 H15 M18 23 H25"/></g></svg><div class="t" style="left:362px;top:1215.84px;font-size:24px;color:#000;-webkit-text-stroke:0.3px #000;">test_integer</div><div class="a" style="left:306px;top:1268.5px;width:12px;height:2px;background:repeating-linear-gradient(90deg,#9a9a9a 0 2px,transparent 2px 4px)"></div><div class="a" style="left:288px;top:1260.5px;width:18px;height:18px;border:2px solid #a8a8a8;border-radius:3px;background:linear-gradient(#f6f6f6,#f0f0f2 50%,#dcdde4 55%,#e8e8ee)"><div class="a" style="left:2.5px;top:5.5px;width:9px;height:3px;background:#40509c"></div><div class="a" style="left:5.5px;top:2.5px;width:3px;height:9px;background:#40509c"></div></div><svg style="left:322px;top:1252.0px" width="32" height="32" viewBox="0 0 32 32"><rect x="3" y="0" width="27" height="31" fill="#3a96e4"/><rect x="5" y="5" width="23" height="24" fill="#dfe6ec"/><rect x="5" y="2" width="23" height="2" fill="#8ec8f4"/><g stroke="#a8a8a8" stroke-width="1.6"><path d="M8 11 H15 M18 11 H25 M8 17 H15 M18 17 H25 M8 23 H15 M18 23 H25"/></g></svg><div class="t" style="left:362px;top:1259.84px;font-size:24px;color:#000;-webkit-text-stroke:0.3px #000;">test_json</div><div class="a" style="left:266px;top:1312.5px;width:12px;height:2px;background:repeating-linear-gradient(90deg,#9a9a9a 0 2px,transparent 2px 4px)"></div><div class="a" style="left:248px;top:1304.5px;width:18px;height:18px;border:2px solid #a8a8a8;border-radius:3px;background:linear-gradient(#f6f6f6,#f0f0f2 50%,#dcdde4 55%,#e8e8ee)"><div class="a" style="left:2.5px;top:5.5px;width:9px;height:3px;background:#40509c"></div><div class="a" style="left:5.5px;top:2.5px;width:3px;height:9px;background:#40509c"></div></div><svg style="left:282px;top:1296.0px" width="32" height="32" viewBox="0 0 32 32"><g fill="#3ab8c0" stroke="#1a8890" stroke-width="1.2"><path d="M2 2 L8 2 L8 26 L2 22Z"/><path d="M6 2 L12 2 L12 28 L6 24Z"/><path d="M10 4 L18 4 L30 18 L18 30 L10 26Z"/></g><path d="M14 10 L24 18 L14 26" stroke="#a0f0f0" stroke-width="2" fill="none"/></svg><div class="t" style="left:322px;top:1303.84px;font-size:24px;color:#000;-webkit-text-stroke:0.3px #000;">Trigger Functions</div><div class="a" style="left:266px;top:1356.5px;width:12px;height:2px;background:repeating-linear-gradient(90deg,#9a9a9a 0 2px,transparent 2px 4px)"></div><div class="a" style="left:248px;top:1348.5px;width:18px;height:18px;border:2px solid #a8a8a8;border-radius:3px;background:linear-gradient(#f6f6f6,#f0f0f2 50%,#dcdde4 55%,#e8e8ee)"><div class="a" style="left:2.5px;top:5.5px;width:9px;height:3px;background:#40509c"></div><div class="a" style="left:5.5px;top:2.5px;width:3px;height:9px;background:#40509c"></div></div><svg style="left:282px;top:1340.0px" width="32" height="32" viewBox="0 0 32 32"><g fill="#88e0b0" stroke="#40b078" stroke-width="1.2"><rect x="1" y="1" width="20" height="20" rx="2"/><rect x="5" y="5" width="21" height="21" rx="2"/><rect x="9" y="9" width="21" height="21" rx="2" fill="#a8f0c8"/></g></svg><div class="t" style="left:322px;top:1347.84px;font-size:24px;color:#000;-webkit-text-stroke:0.3px #000;">Types</div><div class="a" style="left:266px;top:1400.5px;width:12px;height:2px;background:repeating-linear-gradient(90deg,#9a9a9a 0 2px,transparent 2px 4px)"></div><div class="a" style="left:248px;top:1392.5px;width:18px;height:18px;border:2px solid #a8a8a8;border-radius:3px;background:linear-gradient(#f6f6f6,#f0f0f2 50%,#dcdde4 55%,#e8e8ee)"><div class="a" style="left:2.5px;top:5.5px;width:9px;height:3px;background:#40509c"></div><div class="a" style="left:5.5px;top:2.5px;width:3px;height:9px;background:#40509c"></div></div><svg style="left:282px;top:1384.0px" width="32" height="32" viewBox="0 0 32 32"><g fill="#b4e048" stroke="#88b820" stroke-width="1.2"><rect x="1" y="1" width="20" height="20"/><rect x="5" y="5" width="21" height="21"/><rect x="9" y="9" width="22" height="22"/></g><rect x="14" y="14" width="12" height="12" fill="none" stroke="#e8f8c0" stroke-width="2"/><rect x="17" y="17" width="6" height="6" fill="none" stroke="#78a010" stroke-width="1.5"/></svg><div class="t" style="left:322px;top:1391.84px;font-size:24px;color:#000;-webkit-text-stroke:0.3px #000;">Views</div><div class="a" style="left:226px;top:1444.5px;width:12px;height:2px;background:repeating-linear-gradient(90deg,#9a9a9a 0 2px,transparent 2px 4px)"></div><div class="a" style="left:208px;top:1436.5px;width:18px;height:18px;border:2px solid #a8a8a8;border-radius:3px;background:linear-gradient(#f6f6f6,#f0f0f2 50%,#dcdde4 55%,#e8e8ee)"><div class="a" style="left:2.5px;top:5.5px;width:9px;height:3px;background:#40509c"></div><div class="a" style="left:5.5px;top:2.5px;width:3px;height:9px;background:#40509c"></div></div><svg style="left:242px;top:1428.0px" width="32" height="32" viewBox="0 0 32 32"><path d="M16 1 L31 16 L16 31 L1 16Z" fill="#dc4a4a" stroke="#c03a3a" stroke-width="1"/><path d="M16 7 L25 16 L16 25 L7 16Z" fill="#fff"/><circle cx="16" cy="16" r="3.5" fill="#dc4a4a"/></svg><div class="t" style="left:282px;top:1435.84px;font-size:24px;color:#000;-webkit-text-stroke:0.3px #000;">test_me</div><div class="a" style="left:146px;top:1488.5px;width:12px;height:2px;background:repeating-linear-gradient(90deg,#9a9a9a 0 2px,transparent 2px 4px)"></div><div class="a" style="left:128px;top:1480.5px;width:18px;height:18px;border:2px solid #a8a8a8;border-radius:3px;background:linear-gradient(#f6f6f6,#f0f0f2 50%,#dcdde4 55%,#e8e8ee)"><div class="a" style="left:2.5px;top:5.5px;width:9px;height:3px;background:#40509c"></div><div class="a" style="left:5.5px;top:2.5px;width:3px;height:9px;background:#40509c"></div></div><svg style="left:162px;top:1472.0px" width="32" height="32" viewBox="0 0 32 32"><path d="M2 6 Q2 1 14 1 Q26 1 26 6 V27 Q26 31 14 31 Q2 31 2 27Z" fill="#f2ead0" stroke="#c4b078" stroke-width="1.2"/><ellipse cx="14" cy="6" rx="11" ry="4.5" fill="#fbf7e6" stroke="#d8c890" stroke-width="1"/>
<path d="M11 13 L27 30 M27 13 L11 30" stroke="#fff" stroke-width="10" stroke-linecap="round"/><path d="M11 13 L27 30 M27 13 L11 30" stroke="#e42a2a" stroke-width="7" stroke-linecap="round"/></svg><div class="t" style="left:202px;top:1479.84px;font-size:24px;color:#000;-webkit-text-stroke:0.3px #000;">sadfadsf</div><div class="a" style="left:146px;top:1532.5px;width:12px;height:2px;background:repeating-linear-gradient(90deg,#9a9a9a 0 2px,transparent 2px 4px)"></div><div class="a" style="left:128px;top:1524.5px;width:18px;height:18px;border:2px solid #a8a8a8;border-radius:3px;background:linear-gradient(#f6f6f6,#f0f0f2 50%,#dcdde4 55%,#e8e8ee)"><div class="a" style="left:2.5px;top:5.5px;width:9px;height:3px;background:#40509c"></div><div class="a" style="left:5.5px;top:2.5px;width:3px;height:9px;background:#40509c"></div></div><svg style="left:162px;top:1516.0px" width="32" height="32" viewBox="0 0 32 32"><path d="M2 6 Q2 1 14 1 Q26 1 26 6 V27 Q26 31 14 31 Q2 31 2 27Z" fill="#f2ead0" stroke="#c4b078" stroke-width="1.2"/><ellipse cx="14" cy="6" rx="11" ry="4.5" fill="#fbf7e6" stroke="#d8c890" stroke-width="1"/>
<path d="M11 13 L27 30 M27 13 L11 30" stroke="#fff" stroke-width="10" stroke-linecap="round"/><path d="M11 13 L27 30 M27 13 L11 30" stroke="#e42a2a" stroke-width="7" stroke-linecap="round"/></svg><div class="t" style="left:202px;top:1523.84px;font-size:24px;color:#000;-webkit-text-stroke:0.3px #000;">test</div><div class="a" style="left:106px;top:1576.5px;width:12px;height:2px;background:repeating-linear-gradient(90deg,#9a9a9a 0 2px,transparent 2px 4px)"></div><div class="a" style="left:88px;top:1568.5px;width:18px;height:18px;border:2px solid #a8a8a8;border-radius:3px;background:linear-gradient(#f6f6f6,#f0f0f2 50%,#dcdde4 55%,#e8e8ee)"><div class="a" style="left:2.5px;top:5.5px;width:9px;height:3px;background:#40509c"></div><div class="a" style="left:5.5px;top:2.5px;width:3px;height:9px;background:#40509c"></div></div><svg style="left:122px;top:1560.0px" width="32" height="32" viewBox="0 0 32 32"><g fill="#a8b8c8" stroke="#788898" stroke-width="1"><circle cx="9" cy="5" r="4.5"/><path d="M1 20 Q1 11 9 11 Q17 11 17 20Z"/><circle cx="23" cy="9" r="4.5"/><path d="M15 24 Q15 15 23 15 Q31 15 31 24Z"/></g><g fill="#b8d4e4" stroke="#7898a8" stroke-width="1"><circle cx="15" cy="16" r="4.5"/><path d="M7 31 Q7 22 15 22 Q23 22 23 31Z"/></g></svg><div class="t" style="left:162px;top:1567.84px;font-size:24px;color:#000;-webkit-text-stroke:0.3px #000;">Login/Group Roles</div><div class="a" style="left:106px;top:1620.5px;width:12px;height:2px;background:repeating-linear-gradient(90deg,#9a9a9a 0 2px,transparent 2px 4px)"></div><div class="a" style="left:88px;top:1612.5px;width:18px;height:18px;border:2px solid #a8a8a8;border-radius:3px;background:linear-gradient(#f6f6f6,#f0f0f2 50%,#dcdde4 55%,#e8e8ee)"><div class="a" style="left:2.5px;top:5.5px;width:9px;height:3px;background:#40509c"></div><div class="a" style="left:5.5px;top:2.5px;width:3px;height:9px;background:#40509c"></div></div><svg style="left:122px;top:1604.0px" width="32" height="32" viewBox="0 0 32 32"><g fill="#f4e060" stroke="#c0a820" stroke-width="1.2"><path d="M1 4 H8 L10 2 H14 V16 H1Z"/><path d="M6 9 H13 L15 7 H21 V22 H6Z"/><path d="M13 17 H20 L22 15 H30 V31 H13Z"/></g></svg><div class="t" style="left:162px;top:1611.84px;font-size:24px;color:#000;-webkit-text-stroke:0.3px #000;">Tablespaces</div><div class="a" style="left:66px;top:1664.5px;width:12px;height:2px;background:repeating-linear-gradient(90deg,#9a9a9a 0 2px,transparent 2px 4px)"></div><div class="a" style="left:48px;top:1656.5px;width:18px;height:18px;border:2px solid #a8a8a8;border-radius:3px;background:linear-gradient(#f6f6f6,#f0f0f2 50%,#dcdde4 55%,#e8e8ee)"><div class="a" style="left:2.5px;top:5.5px;width:9px;height:3px;background:#40509c"></div><div class="a" style="left:5.5px;top:2.5px;width:3px;height:9px;background:#40509c"></div></div><svg style="left:85px;top:1648.0px" width="32" height="32" viewBox="0 0 32 32"><path d="M4 5 Q4 1 16 1 Q26 1 26 5 V31 H4Z" fill="#e0c8dc" stroke="#a888a0" stroke-width="1.2"/><path d="M6 4 Q16 1 24 4 V8 Q16 6 6 8Z" fill="#f4e8f2"/>
<path d="M9 15 L24 30 M24 15 L9 30" stroke="#fff" stroke-width="10" stroke-linecap="round"/><path d="M9 15 L24 30 M24 15 L9 30" stroke="#e42a2a" stroke-width="7" stroke-linecap="round"/></svg><div class="t" style="left:122px;top:1655.84px;font-size:24px;color:#000;-webkit-text-stroke:0.3px #000;">PostgreSQL 9.5</div></div></div>
<div class="a" style="left:634px;top:170px;width:2246px;height:70px;background:#e6e6e6"></div>
<div class="a" style="left:633px;top:170px;width:3px;height:1520px;background:#bcbcbc"></div>
<div class="a" style="left:2877px;top:240px;width:3px;height:1450px;background:#a0a0a0"></div>
<svg style="left:652px;top:203px" width="27" height="22" viewBox="0 0 27 22"><path d="M13.5 0 A13.5 13.5 0 0 0 0 13.5 V20 Q0 22 2 22 H25 Q27 22 27 20 V13.5 A13.5 13.5 0 0 0 13.5 0Z" fill="#111"/>
<circle cx="5" cy="13" r="1.8" fill="#e6e6e6"/><circle cx="8" cy="6.5" r="1.8" fill="#e6e6e6"/><circle cx="13.5" cy="4" r="1.8" fill="#e6e6e6"/><circle cx="19" cy="6.5" r="1.8" fill="#e6e6e6"/><circle cx="22" cy="13" r="1.8" fill="#e6e6e6"/>
<path d="M12 19 L14.5 8 L15.5 19Z" fill="#e6e6e6"/></svg>
<div class="t" style="left:688px;top:202.16px;font-size:26px;color:#3176b4;-webkit-text-stroke:0.3px #3176b4;">Dashboard</div>
<div class="a" style="left:832px;top:191px;width:2px;height:49px;background:#e0e0e0"></div>
<svg style="left:850px;top:201px" width="29" height="29" viewBox="0 0 29 29"><g fill="#111">
<circle cx="10" cy="14" r="7"/><g stroke="#111" stroke-width="3.5"><path d="M10 4 V24 M0 14 H20 M3 7 L17 21 M17 7 L3 21"/></g>
<circle cx="22" cy="7" r="4.5"/><g stroke="#111" stroke-width="2.5"><path d="M22 0 V14 M15 7 H29 M17 2 L27 12 M27 2 L17 12"/></g>
<circle cx="22" cy="22" r="4.5"/><g stroke="#111" stroke-width="2.5"><path d="M22 15 V29 M15 22 H29 M17 17 L27 27 M27 17 L17 27"/></g>
</g><circle cx="10" cy="14" r="2.8" fill="#e6e6e6"/><circle cx="22" cy="7" r="1.8" fill="#e6e6e6"/><circle cx="22" cy="22" r="1.8" fill="#e6e6e6"/></svg>
<div class="t" style="left:887px;top:202.16px;font-size:26px;color:#3176b4;-webkit-text-stroke:0.3px #3176b4;">Properties</div>
<div class="a" style="left:1023px;top:191px;width:2px;height:49px;background:#e0e0e0"></div>
<svg style="left:1042px;top:201px" width="23" height="29" viewBox="0 0 23 29"><path d="M1.5 1.5 H15 L21.5 8 V27.5 H1.5Z" fill="none" stroke="#111" stroke-width="3"/><path d="M14 1.5 V9 H21.5" fill="none" stroke="#111" stroke-width="2.5"/>
<path d="M6 14 H17 M6 18.5 H17 M6 23 H17" stroke="#111" stroke-width="2"/></svg>
<div class="t" style="left:1072px;top:202.16px;font-size:26px;color:#3176b4;-webkit-text-stroke:0.3px #3176b4;">SQL</div>
<div class="a" style="left:1140px;top:191px;width:2px;height:49px;background:#e0e0e0"></div>
<svg style="left:1157px;top:203px" width="31" height="26" viewBox="0 0 31 26"><path d="M1.5 0 V24.5 H31" fill="none" stroke="#111" stroke-width="3"/>
<path d="M5 20 L12 11 L17 15 L26 5" fill="none" stroke="#111" stroke-width="3.5"/><path d="M21 3 L29 1 L28 9Z" fill="#111"/></svg>
<div class="t" style="left:1196px;top:202.16px;font-size:26px;color:#3176b4;-webkit-text-stroke:0.3px #3176b4;">Statistics</div>
<div class="a" style="left:1320px;top:191px;width:2px;height:49px;background:#e0e0e0"></div>
<svg style="left:1337px;top:201px" width="24" height="29" viewBox="0 0 24 29"><path d="M6 2 Q9 0 10 3 V12 L19 13 Q23 14 23 18 L22 24 Q21 27 18 27 H10 Q7 27 6 24 L1 16 Q0 13 3 13 L6 15Z" fill="none" stroke="#111" stroke-width="2.5"/><rect x="10" y="24" width="11" height="5" fill="#111"/></svg>
<div class="t" style="left:1369px;top:202.16px;font-size:26px;color:#3176b4;-webkit-text-stroke:0.3px #3176b4;">Dependencies</div>
<div class="a" style="left:1555px;top:191px;width:2px;height:49px;background:#e0e0e0"></div>
<svg style="left:1571px;top:201px" width="24" height="29" viewBox="0 0 24 29"><g transform="translate(24 29) rotate(180)"><path d="M6 2 Q9 0 10 3 V12 L19 13 Q23 14 23 18 L22 24 Q21 27 18 27 H10 Q7 27 6 24 L1 16 Q0 13 3 13 L6 15Z" fill="none" stroke="#111" stroke-width="2.5"/><rect x="10" y="24" width="11" height="5" fill="#111"/></g></svg>
<div class="t" style="left:1603px;top:202.16px;font-size:26px;color:#3176b4;-webkit-text-stroke:0.3px #3176b4;">Dependents</div>
<div class="a" style="left:1762px;top:180px;width:158px;height:62px;background:#fff;border-radius:8px 8px 0 0"></div>
<svg style="left:1777px;top:204px" width="16" height="28" viewBox="0 0 16 28"><path d="M6 0 H11 L8 10 L15 9 L4 28 L6 15 L0 16Z" fill="#111"/></svg>
<div class="t" style="left:1807px;top:203.66px;font-size:26px;color:#111;-webkit-text-stroke:0.3px #111;">Query-1</div>
<div class="a" style="left:2819px;top:180px;width:47px;height:48px;border:3px solid #a2a2a2;border-radius:9px;background:#e6e6e6"></div>
<svg style="left:2834px;top:196px" width="18" height="17" viewBox="0 0 18 17"><path d="M3 2.5 L15 14.5 M15 2.5 L3 14.5" stroke="#222" stroke-width="5" stroke-linecap="round"/></svg>
<div class="a" style="left:638px;top:240px;width:2239px;height:80px;background:linear-gradient(#d2d2d2,#d9d9d9);border-top:3px solid #aaaaaa;border-bottom:4px solid #a9aeb4"></div>
<div class="a" style="left:638px;top:240px;width:30px;height:130px;background:#fff"></div>
<div class="a" style="left:644px;top:242px;width:16px;height:127px;background:#c2c2c2;border-radius:8px 8px 0 0"></div>
<div class="a" style="left:650px;top:250px;width:188px;height:61px;background:#dedede;border:1px solid #cfcfcf;border-radius:8px"></div>
<div class="a" style="left:850px;top:250px;width:154px;height:61px;background:#dedede;border:1px solid #cfcfcf;border-radius:8px"></div>
<div class="a" style="left:1016px;top:250px;width:75px;height:61px;background:#dedede;border:1px solid #cfcfcf;border-radius:8px"></div>
<div class="a" style="left:1104px;top:250px;width:113px;height:61px;background:linear-gradient(#fbfbfb,#ebebeb);border:1px solid #cfcfcf;border-radius:8px"></div>
<div class="a" style="left:1416px;top:250px;width:114px;height:61px;background:#dedede;border:1px solid #cfcfcf;border-radius:8px"></div>
<div class="a" style="left:1534px;top:250px;width:76px;height:61px;background:#dedede;border:1px solid #cfcfcf;border-radius:8px"></div>
<div class="a" style="left:1621px;top:250px;width:115px;height:61px;background:#dedede;border:1px solid #cfcfcf;border-radius:8px"></div>
<div class="a" style="left:1748px;top:250px;width:76px;height:61px;background:linear-gradient(#fbfbfb,#ebebeb);border:1px solid #cfcfcf;border-radius:8px"></div>
<div class="a" style="left:1416px;top:250px;width:76px;height:61px;background:linear-gradient(#fbfbfb,#ebebeb);border:1px solid #cfcfcf;border-radius:8px 0 0 8px"></div>
<div class="a" style="left:723px;top:251px;width:2px;height:59px;background:#d2d2d2"></div>
<div class="a" style="left:801px;top:251px;width:2px;height:59px;background:#d2d2d2"></div>
<div class="a" style="left:927px;top:251px;width:2px;height:59px;background:#d2d2d2"></div>
<div class="a" style="left:1181px;top:251px;width:2px;height:59px;background:#d2d2d2"></div>
<div class="a" style="left:1492px;top:251px;width:2px;height:59px;background:#d2d2d2"></div>
<div class="a" style="left:1698px;top:251px;width:2px;height:59px;background:#d2d2d2"></div>
<svg style="left:668px;top:267px" width="34" height="24" viewBox="0 0 34 24"><path d="M3 22 V2 H11 L13 5 H24 V9" fill="none" stroke="#6c6c6c" stroke-width="3"/><path d="M3 22 L9 10 H32 L26 22Z" fill="none" stroke="#6c6c6c" stroke-width="3" stroke-linejoin="round"/></svg>
<svg style="left:750px;top:267px" width="26" height="26" viewBox="0 0 26 26"><path d="M1.5 1.5 H20 L24.5 6 V24.5 H1.5Z" fill="none" stroke="#6c6c6c" stroke-width="3"/><rect x="6" y="2" width="13" height="7" fill="#6c6c6c"/><rect x="6" y="15" width="14" height="9" fill="none" stroke="#6c6c6c" stroke-width="2.5"/></svg>
<div class="a" style="left:812px;top:279px;width:0;height:0;border-left:7px solid transparent;border-right:7px solid transparent;border-top:7px solid #777"></div>
<svg style="left:874px;top:265px" width="30" height="30" viewBox="0 0 30 30"><path d="M9 1.5 H15 L20 6.5 V8 M1.5 6 H9 V21 H1.5Z" fill="none" stroke="#6c6c6c" stroke-width="2.5"/><path d="M12 10 H22 L28 16 V28 H12Z" fill="none" stroke="#6c6c6c" stroke-width="3"/><path d="M21 10 V17 H28" fill="none" stroke="#6c6c6c" stroke-width="2"/></svg>
<svg style="left:952px;top:265px" width="30" height="30" viewBox="0 0 30 30"><path d="M1 2 H16 V10 H10 V28 H1Z" fill="#6c6c6c"/><path d="M12 11.5 H21 L27.5 18 V28.5 H12Z" fill="none" stroke="#6c6c6c" stroke-width="3"/><path d="M20 11 V19 H27" fill="none" stroke="#6c6c6c" stroke-width="2"/></svg>
<svg style="left:1042px;top:267px" width="22" height="26" viewBox="0 0 22 26"><rect x="0" y="3" width="22" height="4" fill="#6c6c6c"/><rect x="7" y="0" width="8" height="4" fill="#6c6c6c"/><path d="M3 8 H19 V24 Q19 26 17 26 H5 Q3 26 3 24Z" fill="#6c6c6c"/><path d="M7.5 10 V23 M11 10 V23 M14.5 10 V23" stroke="#dedede" stroke-width="2"/></svg>
<div class="a" style="left:636px;top:240px;width:32px;height:76px;background:#fff"></div>
<div class="a" style="left:644px;top:242px;width:16px;height:127px;background:#c2c2c2;border-radius:8px 8px 0 0"></div>
<svg style="left:1128px;top:267px" width="26" height="28" viewBox="0 0 26 28"><path d="M0 0 H26 V3 L16 14 V28 L10 22 V14 L0 3Z" fill="#222"/></svg>
<div class="a" style="left:1192px;top:279px;width:0;height:0;border-left:7px solid transparent;border-right:7px solid transparent;border-top:7px solid #333"></div>
<div class="a" style="left:1229px;top:256px;width:178px;height:51px;background:linear-gradient(#ffffff,#f0f0f0);border:2px solid #c6c6c6;border-radius:6px"></div>
<div class="t" style="left:1235px;top:268.28px;font-size:28px;color:#333;-webkit-text-stroke:0.3px #333;">No limit</div>
<div class="a" style="left:1380px;top:278px;width:0;height:0;border-left:7px solid transparent;border-right:7px solid transparent;border-top:7px solid #444"></div>
<svg style="left:1445px;top:267px" width="20" height="28" viewBox="0 0 20 28"><path d="M6 0 H13 L10 9 L18 8 L5 28 L8 15 L1 16Z" fill="#222"/></svg>
<div class="a" style="left:1504px;top:279px;width:0;height:0;border-left:7px solid transparent;border-right:7px solid transparent;border-top:7px solid #777"></div>
<div class="a" style="left:1560px;top:268px;width:24px;height:24px;background:#6e6e6e"></div>
<svg style="left:1645px;top:266px" width="28" height="28" viewBox="0 0 28 28"><path d="M15 4 H5 Q2 4 2 7 V23 Q2 26 5 26 H19 Q22 26 22 23 V16" fill="none" stroke="#6e6e6e" stroke-width="3"/><path d="M10 19 L11 14 L23 2 L27 6 L15 18Z" fill="#6e6e6e"/></svg>
<div class="a" style="left:1710px;top:279px;width:0;height:0;border-left:7px solid transparent;border-right:7px solid transparent;border-top:7px solid #777"></div>
<svg style="left:1773px;top:265px" width="27" height="27" viewBox="0 0 27 27"><path d="M10 0 H17 V9 H23 L13.5 18 L4 9 H10Z" fill="#222"/><path d="M0 16 H7 L13.5 22 L20 16 H27 V27 H0Z" fill="#222"/></svg>
<div class="a" style="left:638px;top:320px;width:2242px;height:49px;background:#2c76b5"></div>
<div class="a" style="left:638px;top:320px;width:30px;height:49px;background:#fff"></div>
<div class="a" style="left:644px;top:316px;width:16px;height:53px;background:#c2c2c2"></div>
<div class="a" style="left:668px;top:320px;width:2209px;height:49px;overflow:hidden"><div class="t" style="left:-8.7px;top:11.16px;font-size:26.6px;color:#fff;-webkit-text-stroke:0.5px #fff;">G9.4-postgres-public.myjson123</div></div>
<div class="a" style="left:638px;top:369px;width:2239px;height:263px;background:#eeeeee"></div>
<div class="a" style="left:638px;top:369px;width:82px;height:263px;background:#f7f7f7;border-right:2px solid #e2e2e2"></div>
<div class="t" style="left:671px;top:385.86px;font-size:28px;color:#999;font-family:'Liberation Mono',monospace;">1</div>
<div class="t" style="left:671px;top:426.36px;font-size:28px;color:#999;font-family:'Liberation Mono',monospace;">2</div>
<div class="t" style="left:671px;top:466.86px;font-size:28px;color:#999;font-family:'Liberation Mono',monospace;">3</div>
<div class="t" style="left:730px;top:385.86px;font-size:28px;color:#000;font-family:'Liberation Mono',monospace;-webkit-text-stroke:0.35px currentColor;"><span style="color:#770088">SELECT</span><span style="color:#000"> </span><span style="color:#111">*</span><span style="color:#000"> </span><span style="color:#770088">FROM</span><span style="color:#000"> </span><span style="color:#770088">public.</span><span style="color:#2a5ab0">myjson</span><span style="color:#1a7a4a">123</span></div>
<div class="t" style="left:730px;top:426.36px;font-size:28px;color:#000;font-family:'Liberation Mono',monospace;-webkit-text-stroke:0.35px currentColor;"><span style="color:#770088">ORDER</span><span style="color:#000"> </span><span style="color:#770088">BY</span><span style="color:#000"> </span><span style="color:#770088">id</span></div>
<div class="t" style="left:730px;top:466.86px;font-size:28px;color:#000;font-family:'Liberation Mono',monospace;-webkit-text-stroke:0.35px currentColor;"><span style="color:#770088">ASC</span></div>
<div class="a" style="left:638px;top:632px;width:2239px;height:8px;background:linear-gradient(#dcdcdc 0 5px,#b8b8b8 5px)"></div>
<div class="a" style="left:638px;top:640px;width:2239px;height:72px;background:#e2e2e2;border-bottom:3px solid #9a9a9a"></div>
<div class="a" style="left:638px;top:640px;width:30px;height:72px;background:#fff"></div>
<div class="a" style="left:644px;top:640px;width:16px;height:72px;background:#bdbdbd"></div>
<div class="a" style="left:668px;top:651px;width:141px;height:58px;background:#fff;border-radius:0 8px 0 0"></div>
<div class="a" style="left:668px;top:651px;width:141px;height:58px;overflow:hidden"><div class="t" style="left:-17px;top:22.16px;font-size:26px;color:#111;-webkit-text-stroke:0.3px #111;">Data Output</div></div>
<div class="t" style="left:828px;top:673.16px;font-size:26px;color:#3176b4;-webkit-text-stroke:0.3px #3176b4;">Explain</div>
<div class="t" style="left:946px;top:673.16px;font-size:26px;color:#3176b4;-webkit-text-stroke:0.3px #3176b4;">Messages</div>
<div class="t" style="left:1098px;top:673.16px;font-size:26px;color:#3176b4;-webkit-text-stroke:0.3px #3176b4;">History</div>
<div class="a" style="left:929px;top:662px;width:2px;height:48px;background:#dadada"></div>
<div class="a" style="left:1081px;top:662px;width:2px;height:48px;background:#dadada"></div>
<div class="a" style="left:1198px;top:662px;width:2px;height:48px;background:#dadada"></div>
<div class="a" style="left:636px;top:712px;width:2241px;height:84px;background:#2c76b5;border-top:2px solid #9fc0e0;border-bottom:4px solid #c6c9cc"></div>
<div class="a" style="left:650px;top:730px;width:28px;height:28px;background:#fff;border-radius:2px"></div>
<div class="a" style="left:696px;top:712px;width:2px;height:82px;background:#6fa0cc"></div>
<div class="t" style="left:710px;top:725.34px;font-size:24px;color:#fff;font-weight:bold;letter-spacing:0.7px;">id</div>
<div class="t" style="left:710px;top:756.84px;font-size:24px;color:#fff;font-weight:bold;letter-spacing:0.7px;">[PK] bigint</div>
<div class="a" style="left:857px;top:712px;width:2px;height:82px;background:#6fa0cc"></div>
<div class="t" style="left:871px;top:725.34px;font-size:24px;color:#fff;font-weight:bold;letter-spacing:0.7px;">col1</div>
<div class="t" style="left:871px;top:756.84px;font-size:24px;color:#fff;font-weight:bold;letter-spacing:0.7px;">json</div>
<div class="a" style="left:1017px;top:712px;width:2px;height:82px;background:#6fa0cc"></div>
<div class="t" style="left:1031px;top:725.34px;font-size:24px;color:#fff;font-weight:bold;letter-spacing:0.7px;">col2</div>
<div class="t" style="left:1031px;top:756.84px;font-size:24px;color:#fff;font-weight:bold;letter-spacing:0.7px;">json[]</div>
<div class="a" style="left:1177px;top:712px;width:2px;height:82px;background:#6fa0cc"></div>
<div class="t" style="left:1191px;top:725.34px;font-size:24px;color:#fff;font-weight:bold;letter-spacing:0.7px;">col3</div>
<div class="t" style="left:1191px;top:756.84px;font-size:24px;color:#fff;font-weight:bold;letter-spacing:0.7px;">jsonb</div>
<div class="a" style="left:1336px;top:712px;width:2px;height:82px;background:#6fa0cc"></div>
<div class="a" style="left:638px;top:796px;width:58px;height:48px;background:#efefef"></div>
<div class="a" style="left:698px;top:796px;width:639px;height:48px;background:#fff"></div>
<div class="a" style="left:640px;top:844px;width:697px;height:2px;background:#d0d0d0"></div>
<div class="a" style="left:696px;top:796px;width:2px;height:50px;background:#dcdcdc"></div>
<div class="a" style="left:648px;top:808px;width:28px;height:28px;background:#fff;border:2px solid #c6c6c6;border-radius:2px"></div>
<div class="t" style="left:709px;top:807.84px;font-size:24px;color:#222;letter-spacing:0.6px;-webkit-text-stroke:0.3px #222;">1</div>
<div class="t" style="left:870px;top:807.84px;font-size:24px;color:#222;letter-spacing:3px;-webkit-text-stroke:0.3px #222;">{&quot;a&quot;:&quot;b&quot;}</div>
<div class="t" style="left:1190px;top:807.84px;font-size:24px;color:#222;letter-spacing:3px;-webkit-text-stroke:0.3px #222;">{&quot;a&quot;:&quot;a&quot;}</div>
<div class="a" style="left:638px;top:846px;width:58px;height:48px;background:#efefef"></div>
<div class="a" style="left:698px;top:846px;width:639px;height:48px;background:#f9f9f9"></div>
<div class="a" style="left:640px;top:894px;width:697px;height:2px;background:#d0d0d0"></div>
<div class="a" style="left:696px;top:846px;width:2px;height:50px;background:#dcdcdc"></div>
<div class="a" style="left:648px;top:858px;width:28px;height:28px;background:#fff;border:2px solid #c6c6c6;border-radius:2px"></div>
<div class="t" style="left:709px;top:857.84px;font-size:24px;color:#222;letter-spacing:0.6px;-webkit-text-stroke:0.3px #222;">2</div>
<div class="t" style="left:870px;top:857.84px;font-size:24px;color:#222;letter-spacing:3px;-webkit-text-stroke:0.3px #222;">{&quot;1&quot;:&quot;1&quot;}</div>
<div class="a" style="left:638px;top:896px;width:58px;height:48px;background:#efefef"></div>
<div class="a" style="left:698px;top:896px;width:639px;height:48px;background:#fff"></div>
<div class="a" style="left:640px;top:944px;width:697px;height:2px;background:#d0d0d0"></div>
<div class="a" style="left:696px;top:896px;width:2px;height:50px;background:#dcdcdc"></div>
<div class="a" style="left:648px;top:908px;width:28px;height:28px;background:#fff;border:2px solid #c6c6c6;border-radius:2px"></div>
<div class="t" style="left:709px;top:907.84px;font-size:24px;color:#222;letter-spacing:0.6px;-webkit-text-stroke:0.3px #222;">5</div>
<div class="t" style="left:870px;top:907.84px;font-size:24px;color:#222;letter-spacing:3px;-webkit-text-stroke:0.3px #222;">{&quot;2&quot;:&quot;8&quot;}</div>
<div class="a" style="left:638px;top:946px;width:58px;height:48px;background:#efefef"></div>
<div class="a" style="left:698px;top:946px;width:639px;height:48px;background:#f9f9f9"></div>
<div class="a" style="left:640px;top:994px;width:697px;height:2px;background:#d0d0d0"></div>
<div class="a" style="left:696px;top:946px;width:2px;height:50px;background:#dcdcdc"></div>
<div class="a" style="left:648px;top:958px;width:28px;height:28px;background:#fff;border:2px solid #c6c6c6;border-radius:2px"></div>
<div class="t" style="left:709px;top:957.84px;font-size:24px;color:#222;letter-spacing:0.6px;-webkit-text-stroke:0.3px #222;">7</div>
<div class="t" style="left:870px;top:957.84px;font-size:24px;color:#222;letter-spacing:3px;-webkit-text-stroke:0.3px #222;">{&quot;3&quot;:&quot;3&quot;}</div>
<div class="a" style="left:638px;top:996px;width:58px;height:48px;background:#efefef"></div>
<div class="a" style="left:698px;top:996px;width:639px;height:48px;background:#fff"></div>
<div class="a" style="left:640px;top:1044px;width:697px;height:2px;background:#d0d0d0"></div>
<div class="a" style="left:696px;top:996px;width:2px;height:50px;background:#dcdcdc"></div>
<div class="a" style="left:648px;top:1008px;width:28px;height:28px;background:#fff;border:2px solid #c6c6c6;border-radius:2px"></div>
<div class="t" style="left:709px;top:1007.84px;font-size:24px;color:#222;letter-spacing:0.6px;-webkit-text-stroke:0.3px #222;">8</div>
<div class="t" style="left:870px;top:1007.84px;font-size:24px;color:#222;letter-spacing:3px;-webkit-text-stroke:0.3px #222;">{&quot;4&quot;:&quot;4&quot;}</div>
<div class="a" style="left:638px;top:1046px;width:58px;height:48px;background:#efefef"></div>
<div class="a" style="left:698px;top:1046px;width:639px;height:48px;background:#f9f9f9"></div>
<div class="a" style="left:640px;top:1094px;width:697px;height:2px;background:#d0d0d0"></div>
<div class="a" style="left:696px;top:1046px;width:2px;height:50px;background:#dcdcdc"></div>
<div class="a" style="left:648px;top:1058px;width:28px;height:28px;background:#fff;border:2px solid #c6c6c6;border-radius:2px"></div>
<div class="t" style="left:709px;top:1057.84px;font-size:24px;color:#222;letter-spacing:0.6px;-webkit-text-stroke:0.3px #222;">9</div>
<div class="a" style="left:638px;top:1096px;width:58px;height:48px;background:#efefef"></div>
<div class="a" style="left:698px;top:1096px;width:639px;height:48px;background:#fff"></div>
<div class="a" style="left:640px;top:1144px;width:697px;height:2px;background:#d0d0d0"></div>
<div class="a" style="left:696px;top:1096px;width:2px;height:50px;background:#dcdcdc"></div>
<div class="a" style="left:648px;top:1108px;width:28px;height:28px;background:#fff;border:2px solid #c6c6c6;border-radius:2px"></div>
<div class="t" style="left:709px;top:1107.84px;font-size:24px;color:#222;letter-spacing:0.6px;-webkit-text-stroke:0.3px #222;">10</div>
<div class="t" style="left:870px;top:1107.84px;font-size:24px;color:#222;letter-spacing:3px;-webkit-text-stroke:0.3px #222;">{&quot;a&quot;:&quot;a&quot;}</div>
<div class="a" style="left:638px;top:1146px;width:58px;height:48px;background:#efefef"></div>
<div class="a" style="left:698px;top:1146px;width:639px;height:48px;background:#fff"></div>
<div class="a" style="left:640px;top:1194px;width:697px;height:2px;background:#d0d0d0"></div>
<div class="a" style="left:696px;top:1146px;width:2px;height:50px;background:#dcdcdc"></div>
<div class="a" style="left:856px;top:796px;width:1px;height:400px;background:repeating-linear-gradient(180deg,#c8c8c8 0 2px,transparent 2px 4px)"></div>
<div class="a" style="left:1016px;top:796px;width:1px;height:400px;background:repeating-linear-gradient(180deg,#c8c8c8 0 2px,transparent 2px 4px)"></div>
<div class="a" style="left:1176px;top:796px;width:1px;height:400px;background:repeating-linear-gradient(180deg,#c8c8c8 0 2px,transparent 2px 4px)"></div>
<div class="a" style="left:1335px;top:796px;width:1px;height:400px;background:repeating-linear-gradient(180deg,#c8c8c8 0 2px,transparent 2px 4px)"></div>
<div class="a" style="left:760px;top:1640px;width:1320px;height:80px;border-radius:40px;background:rgba(0,0,0,.085);filter:blur(22px)"></div>
<div class="a" style="left:636px;top:1688px;width:2244px;height:2px;background:#8c8c8c"></div>
<div class="a" style="left:636px;top:712px;width:2px;height:978px;background:#8c8c8c"></div>
<div class="a" style="left:0;top:1676px;width:14px;height:14px;background:radial-gradient(circle at 100% 0,rgba(0,0,0,0) 12px,#2a2a2a 14px)"></div>
<div class="a" style="left:2866px;top:1676px;width:14px;height:14px;background:radial-gradient(circle at 0 0,rgba(0,0,0,0) 12px,#2a2a2a 14px)"></div></body></html>
